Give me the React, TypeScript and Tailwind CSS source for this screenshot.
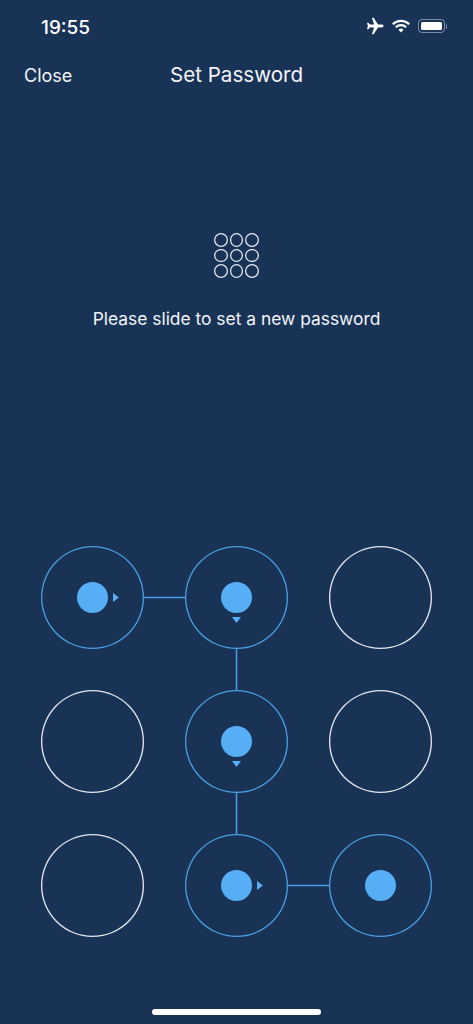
const font = { fontFamily: 'Inter, "Liberation Sans", sans-serif' }

type Arrow = 'right' | 'down' | null

interface NodeProps {
  active?: boolean
  arrow?: Arrow
}

function PatternNode({ active, arrow }: NodeProps) {
  if (!active) {
    return <div className="h-[103px] w-[103px] rounded-full shadow-[inset_0_0_0_1.3px_#e6e9ee]" />
  }

  return (
    <div className="relative flex h-[103px] w-[103px] items-center justify-center rounded-full shadow-[inset_0_0_0_1.3px_#4a9fe0]">
      <div className="h-[31px] w-[31px] rounded-full bg-[#58aef5]" />
      {arrow === 'right' && (
        <svg className="absolute left-[72px] top-[47px]" width="6" height="9" viewBox="0 0 6 9">
          <path d="M0 0 L6 4.5 L0 9 Z" fill="#58aef5" />
        </svg>
      )}
      {arrow === 'down' && (
        <svg className="absolute left-[47px] top-[71px]" width="9" height="6" viewBox="0 0 9 6">
          <path d="M0 0 L9 0 L4.5 6 Z" fill="#58aef5" />
        </svg>
      )}
      {arrow === 'right' && (
        <svg className="absolute left-[103px] top-[50px]" width="41" height="3" viewBox="0 0 41 3">
          <path d="M0 1.500 H41" stroke="#4a9fe0" strokeWidth="1.500" />
        </svg>
      )}
      {arrow === 'down' && (
        <svg className="absolute left-[50px] top-[103px]" width="3" height="41" viewBox="0 0 3 41">
          <path d="M1.500 0 V41" stroke="#4a9fe0" strokeWidth="1.500" />
        </svg>
      )}
    </div>
  )
}

function StatusIcons() {
  return (
    <div className="mb-[2px] flex items-center gap-[8px]">
      <svg width="18" height="18" viewBox="0 0 18 18">
        <path
          d="M17.600 9c0-.8-.9-1.400-2-1.400h-3.500L7.600.8H5.900l2.200 6.800H3.900L2.400 5.700H1l.9 3.300L1 12.300h1.400l1.500-1.900h4.200l-2.200 6.800h1.700l4.500-6.800h3.500c1.100 0 2-.6 2-1.400z"
          fill="#fff"
        />
      </svg>
      <svg width="18" height="14" viewBox="0 0 18 14">
        <path d="M.8 5.200a11.800 11.800 0 0 1 16.400 0" fill="none" stroke="#fff" strokeWidth="2.200" />
        <path d="M3.800 8.200a7.500 7.500 0 0 1 10.400 0" fill="none" stroke="#fff" strokeWidth="2.200" />
        <path d="M6.500 10.800a3.600 3.600 0 0 1 5 0L9 13.600z" fill="#fff" />
      </svg>
      <div className="flex items-center gap-[1px]">
        <div className="h-[14px] w-[27px] rounded-[4px] border border-[#7c8ba3] p-[2px]">
          <div className="h-full w-full rounded-[1.500px] bg-white" />
        </div>
        <div className="h-[5px] w-[1.500px] rounded-r-sm bg-[#7c8ba3]" />
      </div>
    </div>
  )
}

export default function App() {
  const rows: NodeProps[][] = [
    [{ active: true, arrow: 'right' }, { active: true, arrow: 'down' }, {}],
    [{}, { active: true, arrow: 'down' }, {}],
    [{}, { active: true, arrow: 'right' }, { active: true }],
  ]

  return (
    <div className="flex h-[1024px] w-[473px] flex-col overflow-hidden bg-[#193357] text-white" style={font}>
      <div className="flex h-[54px] items-center justify-between pl-[41px] pr-[26px]">
        <span className="text-[19px] font-medium leading-none">19:55</span>
        <StatusIcons />
      </div>

      <div className="relative flex h-[46px] items-center justify-center border-b border-[#1b3052]">
        <span className="absolute left-[24px] pb-[1px] text-[18px] leading-none text-[#f2f4f7]">Close</span>
        <span className="pb-[2px] text-[20.600px] leading-none text-[#f2f4f7]">Set Password</span>
      </div>

      <div className="mt-[133px] grid grid-cols-3 gap-[2px] self-center">
        {Array.from({ length: 9 }).map((_, i) => (
          <div key={i} className="h-[13.500px] w-[13.500px] rounded-full shadow-[inset_0_0_0_1.3px_#e3e7ee]" />
        ))}
      </div>

      <p className="mt-[29px] text-center text-[17.400px] leading-[24px] text-[#f2f4f7]">
        Please slide to set a new password
      </p>

      <div className="mt-[215px] flex flex-col gap-[41px] pl-[41px]">
        {rows.map((row, r) => (
          <div key={r} className="flex gap-[41px]">
            {row.map((node, c) => (
              <PatternNode key={c} {...node} />
            ))}
          </div>
        ))}
      </div>

      <div className="mt-[72px] h-[6px] w-[169px] self-center rounded-full bg-white" />
    </div>
  )
}
